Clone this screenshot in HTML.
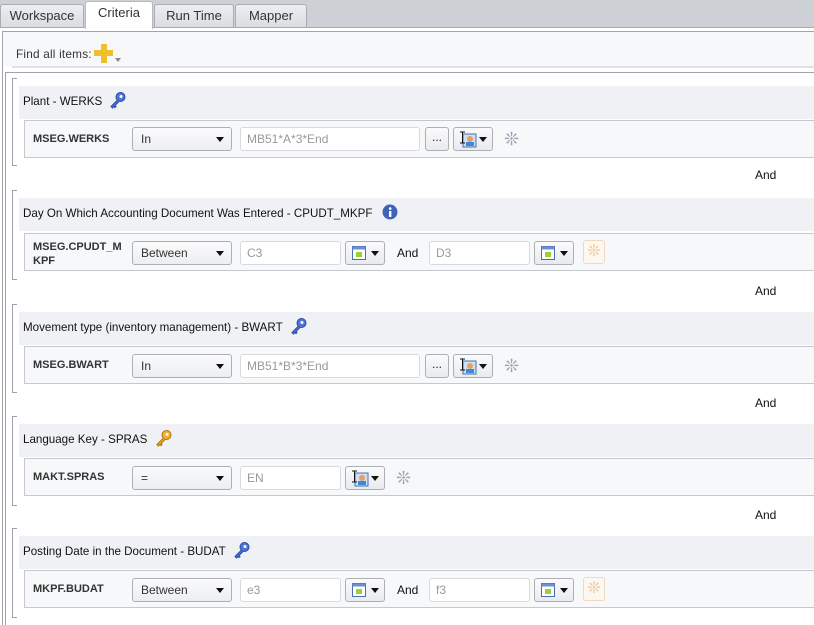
<!DOCTYPE html>
<html><head><meta charset="utf-8"><style>
*{box-sizing:border-box;margin:0;padding:0}
body{width:814px;height:625px;overflow:hidden;background:#fff;font-family:"Liberation Sans",sans-serif;font-size:12px;color:#222;position:relative}
.a{position:absolute}
.tabs{left:0;top:0;width:814px;height:28px;background:#cdd1d6;border-bottom:1px solid #a9adb3}
.tab{top:4px;height:23px;background:linear-gradient(#eceef1,#dadde1);border:1px solid #a9adb3;border-bottom:none;border-radius:3px 3px 0 0;text-align:center;line-height:22px;font-size:13px;color:#333}
.tab.on{top:1px;height:28px;background:#fff;border-color:#b7bbc0}
.hdr{left:19px;width:800px;height:33px;background:#eff1f5;line-height:31px;padding-left:4px;font-size:11.6px;color:#111}
.row{left:24px;width:800px;height:38px;background:#f7f8fa;border:1px solid #c5c9ce}
.lbl{font-weight:bold;font-size:11px;color:#333;left:8px;top:12px}
.sel{height:24px;width:100px;border:1px solid #acb0b5;border-radius:3px;background:linear-gradient(#fbfbfc,#eceef0);padding-left:8px;line-height:22px;color:#333}
.sel:after{content:"";position:absolute;right:7px;top:9px;border:4px solid transparent;border-top:5px solid #111}
.inp{height:24px;border:1px solid #d6d9dd;border-radius:3px;background:#fff;padding-left:6px;line-height:22px;color:#999}
.btn{height:24px;border:1px solid #acb0b5;border-radius:3px;background:linear-gradient(#fbfbfc,#e8eaed)}
.dd:after{content:"";position:absolute;right:5px;top:9px;border:4px solid transparent;border-top:5px solid #111}
.and{left:755px;font-size:12px;color:#111}
.brk{left:12px;width:5px;border:1px solid #a0a4a9;border-right:none}
</style></head><body>
<div class="a tabs"></div>
<div class="a tab" style="left:0;width:84px">Workspace</div>
<div class="a tab on" style="left:85px;width:68px">Criteria</div>
<div class="a tab" style="left:154px;width:80px">Run Time</div>
<div class="a tab" style="left:235px;width:72px">Mapper</div>
<div class="a" style="left:2px;top:31px;width:812px;height:594px;border-left:1px solid #a0a4a9;border-top:1px solid #a0a4a9"></div>
<div class="a" style="left:3px;top:32px;width:811px;height:34px;background:#f7f8fa"></div>
<div class="a" style="left:12px;top:66px;width:802px;height:2px;background:#dfe1e5"></div>
<div class="a" style="left:16px;top:47px;font-size:11.8px;color:#333;letter-spacing:0.2px">Find all items:</div>
<div class="a" style="left:101px;top:44px;width:6px;height:19px;background:#f0c02c"></div>
<div class="a" style="left:94px;top:50px;width:19px;height:6px;background:#f0c02c"></div>
<div class="a" style="left:115px;top:58px;border:3px solid transparent;border-top:4px solid #888"></div>
<div class="a" style="left:5px;top:72px;width:809px;height:553px;border-left:1px solid #a0a4a9;border-top:1px solid #a0a4a9"></div>

<!-- G1 -->
<div class="a brk" style="top:78px;height:88px"></div>
<div class="a hdr" style="top:86px">Plant - WERKS <svg width="18" height="18" viewBox="0 0 18 18" style="vertical-align:-4px;margin-left:4px"><circle cx="11.5" cy="6" r="4.5" fill="#4f74d6" stroke="#2b4aa8"/><circle cx="12" cy="5.5" r="1.5" fill="#fff"/><path d="M8.5 9 L2 15.5 L3.5 17 L5 15.5 L6 16.5 L7 15.5 L6 14.5 L10 10.5" fill="#4f74d6" stroke="#2b4aa8"/></svg></div>
<div class="a row" style="top:120px">
 <div class="a lbl">MSEG.WERKS</div>
 <div class="a sel" style="left:107px;top:6px">In</div>
 <div class="a inp" style="left:215px;top:6px;width:180px">MB51*A*3*End</div>
 <div class="a btn" style="left:400px;top:6px;width:24px;text-align:center;line-height:18px">...</div>
 <div class="a btn dd" style="left:428px;top:6px;width:40px"><svg class="a" style="left:5px;top:3px" width="18" height="17"><rect x="4" y="3" width="13" height="13" fill="#cfe0f5" stroke="#4a6fb0"/><circle cx="11" cy="8" r="3" fill="#e5a060"/><rect x="7" y="11" width="8" height="4" fill="#3a8ad8"/><path d="M1 1h5M3.5 1v11M1 12h5" stroke="#111"/></svg></div>
 <div class="a" style="left:479px;top:9px;color:#9aa8b8;font-size:18px;line-height:18px">❊</div>
</div>
<div class="a and" style="top:168px">And</div>

<!-- G2 -->
<div class="a brk" style="top:190px;height:90px"></div>
<div class="a hdr" style="top:198px">Day On Which Accounting Document Was Entered - CPUDT_MKPF <svg width="16" height="16" style="vertical-align:-3px;margin-left:6px"><circle cx="8" cy="8" r="7.5" fill="#3f63b8"/><rect x="7" y="7" width="2.4" height="6" fill="#fff"/><circle cx="8.2" cy="4.6" r="1.3" fill="#fff"/></svg></div>
<div class="a row" style="top:233px">
 <div class="a lbl" style="top:6px;line-height:14px">MSEG.CPUDT_M<br>KPF</div>
 <div class="a sel" style="left:107px;top:7px">Between</div>
 <div class="a inp" style="left:215px;top:7px;width:101px">C3</div>
 <div class="a btn dd" style="left:320px;top:7px;width:40px"><svg class="a" style="left:5px;top:3px" width="16" height="16"><rect x="1.5" y="1.5" width="13" height="13" fill="#fff" stroke="#4a6fb0"/><rect x="1.5" y="1.5" width="13" height="3" fill="#6e8ed0"/><rect x="5" y="7" width="6" height="5" fill="#9ed030"/></svg></div>
 <div class="a" style="left:372px;top:12px;color:#111">And</div>
 <div class="a inp" style="left:404px;top:7px;width:101px">D3</div>
 <div class="a btn dd" style="left:509px;top:7px;width:40px"><svg class="a" style="left:5px;top:3px" width="16" height="16"><rect x="1.5" y="1.5" width="13" height="13" fill="#fff" stroke="#4a6fb0"/><rect x="1.5" y="1.5" width="13" height="3" fill="#6e8ed0"/><rect x="5" y="7" width="6" height="5" fill="#9ed030"/></svg></div>
 <div class="a" style="left:558px;top:6px;width:22px;height:24px;border:1px solid #f1d9c0;border-radius:3px;background:#fdf7f1;color:#f0c8a0;font-size:16px;text-align:center;line-height:22px">❊</div>
</div>
<div class="a and" style="top:284px">And</div>

<!-- G3 -->
<div class="a brk" style="top:304px;height:89px"></div>
<div class="a hdr" style="top:312px">Movement type (inventory management) - BWART <svg width="18" height="18" viewBox="0 0 18 18" style="vertical-align:-4px;margin-left:4px"><circle cx="11.5" cy="6" r="4.5" fill="#4f74d6" stroke="#2b4aa8"/><circle cx="12" cy="5.5" r="1.5" fill="#fff"/><path d="M8.5 9 L2 15.5 L3.5 17 L5 15.5 L6 16.5 L7 15.5 L6 14.5 L10 10.5" fill="#4f74d6" stroke="#2b4aa8"/></svg></div>
<div class="a row" style="top:346px">
 <div class="a lbl">MSEG.BWART</div>
 <div class="a sel" style="left:107px;top:7px">In</div>
 <div class="a inp" style="left:215px;top:7px;width:180px">MB51*B*3*End</div>
 <div class="a btn" style="left:400px;top:7px;width:24px;text-align:center;line-height:18px">...</div>
 <div class="a btn dd" style="left:428px;top:7px;width:40px"><svg class="a" style="left:5px;top:3px" width="18" height="17"><rect x="4" y="3" width="13" height="13" fill="#cfe0f5" stroke="#4a6fb0"/><circle cx="11" cy="8" r="3" fill="#e5a060"/><rect x="7" y="11" width="8" height="4" fill="#3a8ad8"/><path d="M1 1h5M3.5 1v11M1 12h5" stroke="#111"/></svg></div>
 <div class="a" style="left:479px;top:10px;color:#9aa8b8;font-size:18px;line-height:18px">❊</div>
</div>
<div class="a and" style="top:396px">And</div>

<!-- G4 -->
<div class="a brk" style="top:416px;height:90px"></div>
<div class="a hdr" style="top:424px">Language Key - SPRAS <svg width="18" height="18" viewBox="0 0 18 18" style="vertical-align:-4px;margin-left:4px"><circle cx="11.5" cy="6" r="4.5" fill="#f0b030" stroke="#b07010"/><circle cx="12" cy="5.5" r="1.5" fill="#fff"/><path d="M8.5 9 L2 15.5 L3.5 17 L5 15.5 L6 16.5 L7 15.5 L6 14.5 L10 10.5" fill="#f0b030" stroke="#b07010"/></svg></div>
<div class="a row" style="top:458px">
 <div class="a lbl">MAKT.SPRAS</div>
 <div class="a sel" style="left:107px;top:7px">=</div>
 <div class="a inp" style="left:215px;top:7px;width:101px">EN</div>
 <div class="a btn dd" style="left:320px;top:7px;width:40px"><svg class="a" style="left:5px;top:3px" width="18" height="17"><rect x="4" y="3" width="13" height="13" fill="#cfe0f5" stroke="#4a6fb0"/><circle cx="11" cy="8" r="3" fill="#e5a060"/><rect x="7" y="11" width="8" height="4" fill="#3a8ad8"/><path d="M1 1h5M3.5 1v11M1 12h5" stroke="#111"/></svg></div>
 <div class="a" style="left:371px;top:10px;color:#9aa8b8;font-size:18px;line-height:18px">❊</div>
</div>
<div class="a and" style="top:508px">And</div>

<!-- G5 -->
<div class="a brk" style="top:528px;height:90px"></div>
<div class="a hdr" style="top:536px">Posting Date in the Document - BUDAT <svg width="18" height="18" viewBox="0 0 18 18" style="vertical-align:-4px;margin-left:4px"><circle cx="11.5" cy="6" r="4.5" fill="#4f74d6" stroke="#2b4aa8"/><circle cx="12" cy="5.5" r="1.5" fill="#fff"/><path d="M8.5 9 L2 15.5 L3.5 17 L5 15.5 L6 16.5 L7 15.5 L6 14.5 L10 10.5" fill="#4f74d6" stroke="#2b4aa8"/></svg></div>
<div class="a row" style="top:570px">
 <div class="a lbl">MKPF.BUDAT</div>
 <div class="a sel" style="left:107px;top:7px">Between</div>
 <div class="a inp" style="left:215px;top:7px;width:101px">e3</div>
 <div class="a btn dd" style="left:320px;top:7px;width:40px"><svg class="a" style="left:5px;top:3px" width="16" height="16"><rect x="1.5" y="1.5" width="13" height="13" fill="#fff" stroke="#4a6fb0"/><rect x="1.5" y="1.5" width="13" height="3" fill="#6e8ed0"/><rect x="5" y="7" width="6" height="5" fill="#9ed030"/></svg></div>
 <div class="a" style="left:372px;top:12px;color:#111">And</div>
 <div class="a inp" style="left:404px;top:7px;width:101px">f3</div>
 <div class="a btn dd" style="left:509px;top:7px;width:40px"><svg class="a" style="left:5px;top:3px" width="16" height="16"><rect x="1.5" y="1.5" width="13" height="13" fill="#fff" stroke="#4a6fb0"/><rect x="1.5" y="1.5" width="13" height="3" fill="#6e8ed0"/><rect x="5" y="7" width="6" height="5" fill="#9ed030"/></svg></div>
 <div class="a" style="left:558px;top:6px;width:22px;height:24px;border:1px solid #f1d9c0;border-radius:3px;background:#fdf7f1;color:#f0c8a0;font-size:16px;text-align:center;line-height:22px">❊</div>
</div>
</body></html>
